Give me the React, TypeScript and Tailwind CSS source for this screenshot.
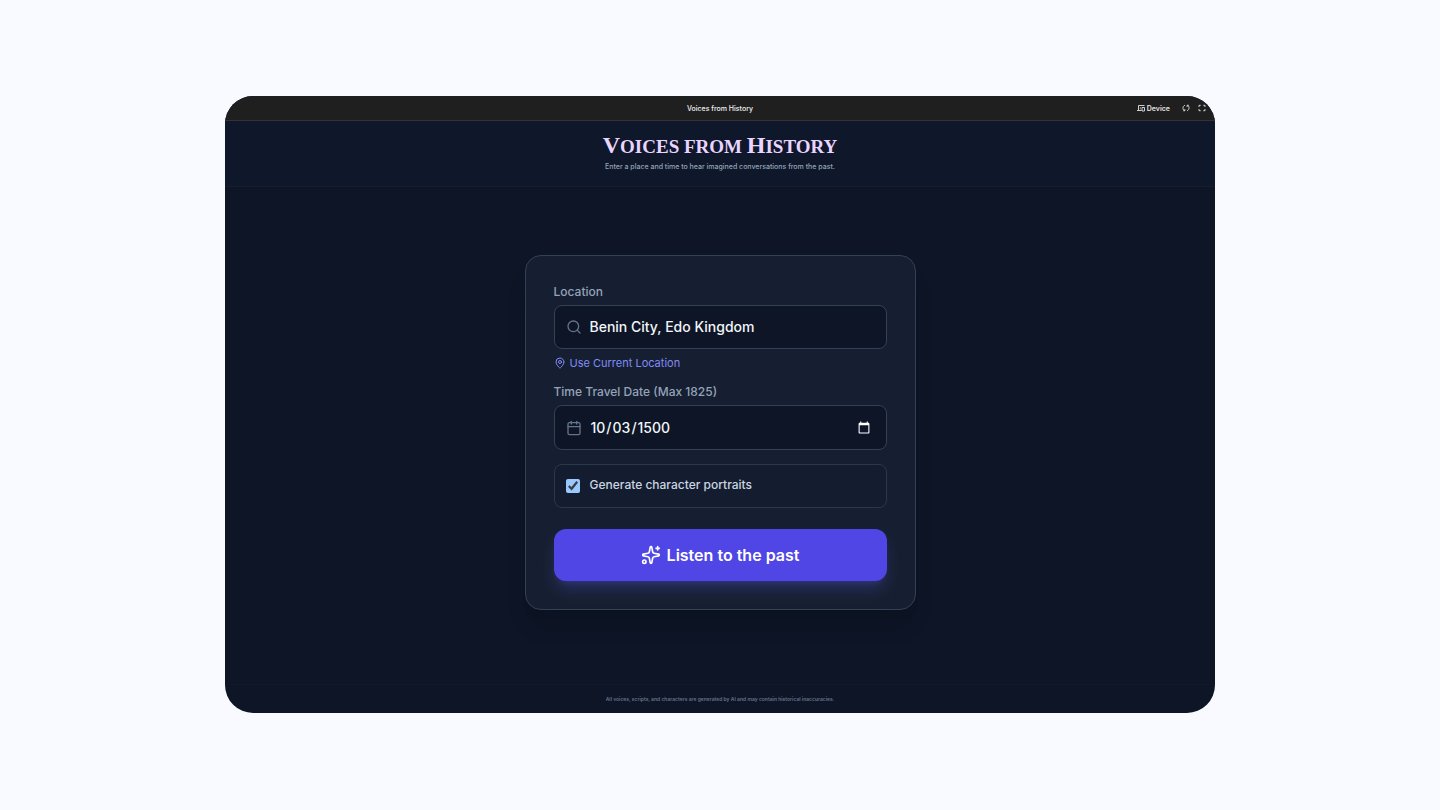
import React, { useState } from 'react';
import { Search, MapPin, Calendar } from 'lucide-react';

const TitleBar: React.FC = () => (
  <div className="grid h-[25px] grid-cols-3 items-center border-b border-[#333333] bg-[#1f1f1f] px-[9px] text-[7px] leading-none text-[#e3e3e3]">
    <span className="col-start-2 text-center font-medium text-[#f2f2f2]">Voices from History</span>
    <div className="flex items-center justify-end">
      <button type="button" className="flex items-center gap-0.5 font-semibold">
        <svg className="size-2" viewBox="0 0 8 8" fill="none" stroke="currentColor">
          <path d="M7.500 1.500H1.500V6M0 6.500h4.500" strokeWidth="0.9" />
          <path d="M5 3.500h2.500v3.500H5z" strokeWidth="0.9" />
          <path d="M3.300 3v2.500" strokeWidth="0.6" />
        </svg>
        Device
      </button>
      <button type="button" aria-label="Reload" className="ml-3">
        <svg className="size-2" viewBox="0 0 8 8" fill="none" stroke="currentColor" strokeWidth="0.9">
          <path d="M3 1.200C.4 2.200.4 5.600 2.400 6.600M1.200 6.700h1.700V5M5 6.800c2.600-1 2.600-4.400.6-5.400M6.800 1.300H5.100V3" />
        </svg>
      </button>
      <button type="button" aria-label="Full screen" className="ml-2">
        <svg className="size-2" viewBox="0 0 8 8" fill="none" stroke="currentColor" strokeWidth="0.9">
          <path d="M1 3V1.300h1.700M5.300 1.300H7V3M7 5v1.700H5.300M2.700 6.700H1V5" />
        </svg>
      </button>
    </div>
  </div>
);

const SparkleIcon: React.FC = () => (
  <svg
    className="size-5"
    viewBox="0 0 24 24"
    fill="none"
    stroke="currentColor"
    strokeWidth="2"
    strokeLinecap="round"
    strokeLinejoin="round"
  >
    <path d="M11.017 2.814a1 1 0 0 1 1.966 0l1.051 5.558a2 2 0 0 0 1.594 1.594l5.558 1.051a1 1 0 0 1 0 1.966l-5.558 1.051a2 2 0 0 0-1.594 1.594l-1.051 5.558a1 1 0 0 1-1.966 0l-1.051-5.558a2 2 0 0 0-1.594-1.594l-5.558-1.051a1 1 0 0 1 0-1.966l5.558-1.051a2 2 0 0 0 1.594-1.594z" />
    <path d="M20 2v4M22 4h-4" />
    <circle cx="4" cy="20" r="2" />
  </svg>
);

const App: React.FC = () => {
  const [location, setLocation] = useState('Benin City, Edo Kingdom');
  const [date, setDate] = useState('1500-10-03');
  const [portraits, setPortraits] = useState(true);

  return (
    <div className="flex min-h-screen flex-col items-center bg-[#f8faff] px-6 pt-24 pb-[97px] font-['Inter',sans-serif]">
      <div className="flex w-full max-w-[990px] flex-1 flex-col overflow-hidden rounded-[28px] bg-[#0d1526] scheme-dark">
        <TitleBar />

        {/* Header */}
        <header className="flex flex-col items-center border-b border-[#151e30] bg-[#0f172a] pt-3 pb-3.5">
          <h1 className="h-6 font-['Liberation_Serif',serif] text-2xl leading-6 font-bold text-[#e9d5ff] uppercase">
            V<span className="text-[19px]">oices from </span>H<span className="text-[19px]">istory</span>
          </h1>
          <p className="mt-[5px] text-[7px] leading-[10px] font-medium text-[#94a3b8]">
            Enter a place and time to hear imagined conversations from the past.
          </p>
        </header>

        {/* Form */}
        <main className="flex flex-1 items-center justify-center px-4 pb-1.5">
          <form
            className="w-full max-w-[391px] rounded-2xl border border-[#334155] bg-[#161f31] p-7 shadow-xl"
            onSubmit={e => e.preventDefault()}
          >
            <label htmlFor="location" className="mb-[5px] block text-xs leading-4 font-medium text-[#94a3b8]">
              Location
            </label>
            <div className="flex h-11 items-center gap-2 rounded-lg border border-[#334155] bg-[#0d1526] px-[11px]">
              <Search className="size-4 shrink-0 text-[#64748b]" />
              <input
                id="location"
                type="text"
                value={location}
                onChange={e => setLocation(e.target.value)}
                className="w-full min-w-0 bg-transparent text-sm font-medium text-[#f1f5f9] outline-none"
              />
            </div>
            <button type="button" className="mt-1.5 flex items-center gap-1 text-[11px] leading-4 text-[#818cf8]">
              <MapPin className="size-3" />
              Use Current Location
            </button>

            <label htmlFor="date" className="mt-[13px] mb-[5px] block text-xs leading-4 font-medium text-[#94a3b8]">
              Time Travel Date (Max 1825)
            </label>
            <div className="flex h-[45px] items-center gap-2 rounded-lg border border-[#334155] bg-[#0d1526] px-[11px]">
              <Calendar className="size-4 shrink-0 text-[#64748b]" />
              <input
                id="date"
                type="date"
                max="1825-12-31"
                value={date}
                onChange={e => setDate(e.target.value)}
                className="w-full min-w-0 bg-transparent pr-0.5 text-sm font-medium text-[#f1f5f9] outline-none"
              />
            </div>

            <div className="mt-3.5 flex h-11 items-center gap-2.5 rounded-lg border border-[#2b384b] bg-[#141d2f] px-[11px]">
              <input
                id="portraits"
                type="checkbox"
                checked={portraits}
                onChange={e => setPortraits(e.target.checked)}
                className="size-3.5"
              />
              <label htmlFor="portraits" className="pb-0.5 text-xs font-medium text-[#cbd5e1]">
                Generate character portraits
              </label>
            </div>

            <button
              type="submit"
              className="mt-[21px] flex h-[52px] w-full items-center justify-center gap-1.5 rounded-xl bg-[#4f46e5] text-base font-semibold text-white shadow-lg shadow-indigo-500/25"
            >
              <SparkleIcon />
              Listen to the past
            </button>
          </form>
        </main>

        {/* Footer */}
        <footer className="border-t border-[#111a2c] py-2.5 text-center text-[5px] leading-2 font-semibold text-[#64748b]">
          All voices, scripts, and characters are generated by AI and may contain historical inaccuracies.
        </footer>
      </div>
    </div>
  );
};

export default App;
